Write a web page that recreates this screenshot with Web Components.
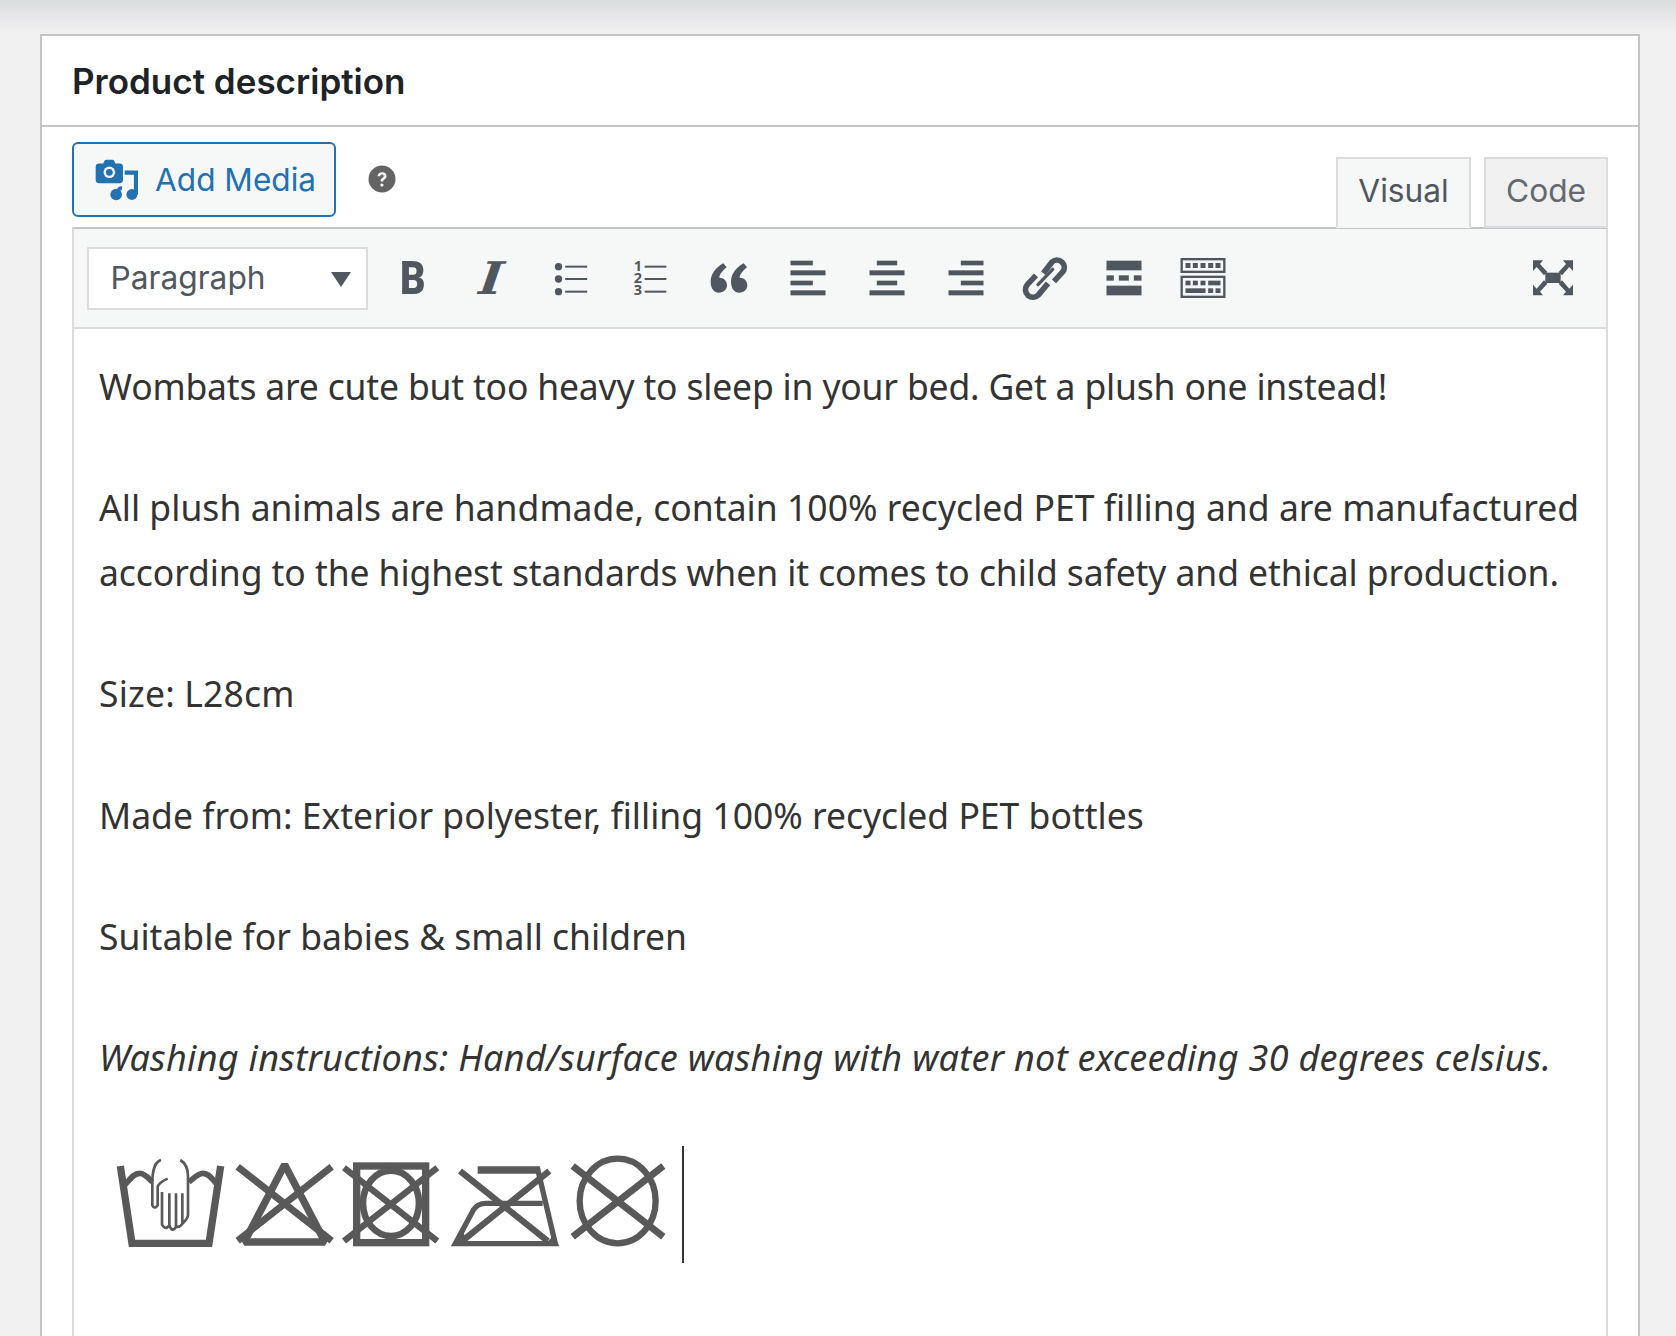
<!DOCTYPE html>
<html><head><meta charset="utf-8"><title>Product description</title>
<style>
html,body{margin:0;padding:0;background:#f0f0f1}
body{height:1336px;overflow:hidden}
</style></head>
<body>
<wp-page>
  <meta-box heading="Product description">
    <editor-frame>
      <media-button slot="left">Add Media</media-button>
      <help-dot slot="left"></help-dot>
      <editor-tab slot="tabs" active>Visual</editor-tab>
      <editor-tab slot="tabs">Code</editor-tab>
      <edit-toolbar slot="toolbar">
        <format-select>Paragraph</format-select>
        <tool-letter kind="b">B</tool-letter>
        <tool-letter kind="i">I</tool-letter>
        <tool-icon name="ul"></tool-icon>
        <tool-icon name="ol"></tool-icon>
        <tool-icon name="quote"></tool-icon>
        <tool-icon name="left"></tool-icon>
        <tool-icon name="center"></tool-icon>
        <tool-icon name="right"></tool-icon>
        <tool-icon name="link"></tool-icon>
        <tool-icon name="more"></tool-icon>
        <tool-icon name="sink"></tool-icon>
        <tool-icon name="full" style="margin-left:auto"></tool-icon>
      </edit-toolbar>
      <rich-content slot="content">
        <p style="letter-spacing:-.18px">Wombats are cute but too heavy to sleep in your bed. Get a plush one instead!</p>
        <p><span style="letter-spacing:.03px">All plush animals are handmade, contain 100% recycled PET filling and are manufactured</span> <span style="letter-spacing:-.08px">according to the highest standards when it comes to child safety and ethical production.</span></p>
        <p style="letter-spacing:.2px">Size: L28cm</p>
        <p>Made from: Exterior polyester, filling 100% recycled PET bottles</p>
        <p>Suitable for babies &amp; small children</p>
        <p style="font-size:36px;letter-spacing:.29px"><em>Washing instructions: Hand/surface washing with water not exceeding 30 degrees celsius.</em></p>
        <care-row></care-row>
      </rich-content>
    </editor-frame>
  </meta-box>
</wp-page>
<script>
const UI='Inter,"Liberation Sans",sans-serif';
function def(name,html,extra){
  customElements.define(name,class extends HTMLElement{
    constructor(){super();this.attachShadow({mode:'open'}).innerHTML=typeof html==='function'?html(this):html;}
    connectedCallback(){ if(extra) extra(this); }
  });
}
def('wp-page',`<style>
:host{display:block;height:1336px;overflow:hidden;background:#f0f0f1}
.shade{height:34px;background:linear-gradient(#dbdcde,#e6e6e8 45%,#eeeeef 85%,#f0f0f1)}
.wrap{padding:0 36px 0 40px}
</style><div class="shade"></div><div class="wrap"><slot></slot></div>`);

def('meta-box',`<style>
:host{display:block;background:#fff;border:2px solid #c3c4c7;font-family:${UI}}
h2{margin:0;height:89px;box-sizing:border-box;padding:2px 30px 0;display:flex;align-items:center;font:600 35px/1 ${UI};color:#1d2327}
.rule{height:2px;background:#c3c4c7}
.body{padding:15px 30px 0}
</style><h2 id="h"></h2><div class="rule"></div><div class="body"><slot></slot></div>`,
el=>{el.shadowRoot.getElementById('h').textContent=el.getAttribute('heading')});

def('editor-frame',`<style>
:host{display:block}
.tools{display:flex;justify-content:space-between;align-items:flex-end}
.left{display:flex;align-items:center;gap:32px;margin-bottom:10px}
.tabs{display:flex;gap:13px;margin-bottom:-1px;position:relative;z-index:1}
.area{border-left:2px solid #dcdcde;border-right:2px solid #dcdcde;background:#fff}
</style>
<div class="tools"><div class="left"><slot name="left"></slot></div><div class="tabs"><slot name="tabs"></slot></div></div>
<slot name="toolbar"></slot>
<div class="area"><slot name="content"></slot></div>`);

def('media-button',`<style>
:host{display:inline-flex;align-items:center;box-sizing:border-box;width:264px;height:75px;border:2px solid #2271b1;border-radius:6px;background:#f6f7f7;color:#2271b1;font:400 31.600px/1 ${UI};padding-left:21px;gap:17px}
svg{width:43px;height:43px;flex:none;margin-top:2px}
</style><svg viewBox="106 90 126 126" fill="#2271b1"><path d="M118 103h12l4-8q1-3 5-3h18q4 0 5 3l4 8h12q10 0 10 10v38q0 10-10 10h-60q-10 0-10-10v-38q0-10 10-10z"/><circle cx="148" cy="129" r="17" fill="#f6f7f7"/><circle cx="148" cy="129" r="10"/><path d="M193 124h39v11h-0v60h-12v-59h-27z"/><circle cx="214" cy="194" r="16"/><circle cx="168" cy="194" r="17"/><path d="M172 174q6-4 14-4l-2 12h-12z"/></svg><slot></slot>`);

def('help-dot',`<style>
:host{display:inline-block;width:28px;height:28px;margin:0 0 2px -.5px}
svg{display:block}
</style><svg width="28" height="28" viewBox="0 0 28 28"><circle cx="14" cy="14" r="13.5" fill="#646464"/><path d="M9.6 11.2c.2-2.600 2-3.900 4.500-3.900 2.600 0 4.400 1.500 4.400 3.700 0 1.700-.9 2.600-2.100 3.400-1 .7-1.300 1.100-1.300 2.100h-2.500c-.1-1.600.5-2.500 1.700-3.400 1-.7 1.500-1.200 1.500-2 0-.9-.7-1.500-1.700-1.500-1.100 0-1.800.7-1.900 1.600z" fill="#fff"/><circle cx="13.900" cy="20" r="1.600" fill="#fff"/></svg>`);

def('editor-tab',el=>{const a=el.hasAttribute('active');return `<style>
:host{display:block;box-sizing:border-box;height:71px;border:2px solid #dcdcde;${a?'border-bottom-color:#f6f7f7;width:135px;background:#f6f7f7;color:#50575e':'width:124px;background:#f0f0f1;color:#646970'};font:400 31.700px/1 ${UI}}
div{height:100%;display:flex;align-items:center;justify-content:center;padding-bottom:4px;box-sizing:border-box}
</style><div><slot></slot></div>`});

def('edit-toolbar',`<style>
:host{display:flex;align-items:center;box-sizing:content-box;height:98px;background:#f6f7f7;border:2px solid #dcdcde;border-top-color:#c3c4c7;padding:0 14px 0 12.500px}
</style><slot></slot>`);

def('format-select',`<style>
:host{display:flex;align-items:center;box-sizing:border-box;width:281px;height:63px;margin-right:6px;background:#fff;border:2px solid #dcdcde;padding:0 15px 0 22px;font:400 31.700px/1 ${UI};color:#50575e;justify-content:space-between}
i{display:block;width:0;height:0;border-left:10px solid transparent;border-right:10px solid transparent;border-top:15px solid #50575e;margin-top:3px}
</style><span><slot></slot></span><i></i>`);

def('tool-letter',el=>{const b=el.getAttribute('kind')==='b';return `<style>
:host{display:flex;width:79px;height:60px;align-items:center;justify-content:center;color:#50575e;flex:none;
${b?`font:900 46px/1 Roboto,sans-serif`:`font:italic 700 45px/1 "DejaVu Serif",serif`}}
span{display:block;${b?'transform:scaleX(.86)':'transform:skewX(-7deg) scaleX(1.12)'}}
</style><span><slot></slot></span>`});

const R=(x,y,w,h)=>`<rect x="${x}" y="${y}" width="${w}" height="${h}"/>`;
const ICONS={
 ul:[484.5,54,`<circle cx="537" cy="110" r="11"/><circle cx="537" cy="147" r="11"/><circle cx="537" cy="185" r="11"/>`+R(557,107,66,6)+R(557,144,66,6)+R(557,182,66,6)],
 ol:[721,54,R(795,107,65,6)+R(795,144,65,6)+R(795,182,65,6)],
 quote:[957,54,`<path d="M1030 100l10 12c-15 13-22 23-22 31 14 0 23 10 23 23s-11 22-24 22c-15 0-25-13-25-33 0-23 16-43 38-55z"/><path d="M1091 100l10 12c-15 13-22 23-22 31 14 0 23 10 23 23s-11 22-24 22c-15 0-25-13-25-33 0-23 16-43 38-55z"/>`],
 left:[1192.5,54,R(1230,92,67,14)+R(1230,121,105,15)+R(1230,152,67,14)+R(1230,181,105,15)],
 center:[-10.5,24,R(49,62,61,14)+R(27,91,105,15)+R(49,122,61,14)+R(27,151,105,15)],
 right:[226.5,24,R(301,62,68,14)+R(264,91,105,15)+R(301,122,68,14)+R(264,151,105,15)],
 link:[467,24,`<g fill="none" stroke="#50575e" stroke-width="17"><path d="M552 100L578 66A22 22 0 0 1 610 96L584 124"/><path d="M566 130L538 164A22 22 0 0 1 504 134L530 106"/><path d="M536 134l44-46" stroke-width="10" stroke-linecap="round"/></g>`],
 more:[700.5,24,R(738,62,105,29)+R(738,106,22,16)+R(775,106,30,16)+R(820,106,23,16)+R(738,137,105,29)],
 sink:[937.5,24,`<g fill="none" stroke="#50575e" stroke-width="7"><rect x="963.500" y="57.500" width="128" height="38"/><rect x="963.500" y="110.500" width="128" height="60"/></g>`+R(975,69,15,15)+R(997,69,15,15)+R(1020,69,15,15)+R(1043,69,15,15)+R(1065,69,15,15)+R(975,122,15,14)+R(997,122,15,14)+R(1020,122,15,14)+R(1043,122,37,14)+R(975,145,60,14)+R(1043,145,15,14)+R(1065,145,15,14)],
 full:[610,324,R(677,398,46,31)+[[0,0,'1 1'],[1400,0,'-1 1'],[0,827,'1 -1'],[1400,827,'-1 -1']].map(([x,y,s])=>`<path transform="translate(${x} ${y}) scale(${s})" d="M640 361h30l-9 11 22 24-10 10-22-25-11 12z"/>`).join('')]
};
def('tool-icon',el=>{const n=el.getAttribute('name');const [x,y,c]=ICONS[n];return `<style>
:host{display:flex;width:79px;height:60px;justify-content:center;flex:none;position:relative}
.nums{position:absolute;left:22px;top:8px;writing-mode:vertical-rl;text-orientation:upright;font:700 14.500px/10px "Open Sans",sans-serif;letter-spacing:-7px;color:#50575e;white-space:nowrap}
</style><svg width="60" height="60" viewBox="${x} ${y} 180 180" fill="#50575e">${c}</svg>${n==='ol'?'<span class="nums">123</span>':''}`});

def('rich-content',`<style>
:host{display:block;padding:25px 24px 0 25px;font:400 35.500px/65px "Noto Sans",sans-serif;color:#333;height:1100px;background:#fff}
::slotted(p){margin:0 0 56.200px}
</style><slot></slot>`);

const SY=[
 [40,360,`<g fill="none" stroke="#595959"><path stroke-width="22" d="M62 110L97 342H328L363 110"/><path stroke-width="17" d="M70 172C88 155 100 132 120 132C136 132 146 146 158 158M268 158C284 146 294 132 310 132C330 132 342 155 357 172"/><path stroke-width="8" d="M184 92C165 98 160 120 158 150V228Q165 242 174 228V172Q178 160 204 148M187 188V286Q197 304 209 288V192M209 288Q218 312 229 292V192M229 292Q240 296 248 283V192M248 283Q263 270 265 258V140C265 115 258 102 242 92"/></g>`],
 [400,323,`<g fill="none" stroke="#595959"><path stroke-width="22" stroke-linejoin="bevel" d="M555 106L434 338H676Z"/><path stroke-width="21" d="M414 112L696 334M696 112L414 334"/></g>`],
 [33,317,`<g fill="none" stroke="#595959"><rect x="80" y="110" width="207" height="230" stroke-width="22"/><ellipse cx="183" cy="222" rx="84" ry="98" stroke-width="20"/><path stroke-width="19" d="M42 115L322 335M322 115L42 335"/></g>`],
 [350,355,`<g fill="none" stroke="#595959"><path stroke-width="22" d="M445 122H632"/><path stroke-width="16" d="M624 115L678 343H378L432 242Q445 222 470 222H640"/><path stroke-width="19" d="M392 125L655 335M660 125L395 338"/></g><path fill="#595959" d="M366 350L400 290L410 345ZM690 350L672 320L640 350Z"/>`],
 [705,335,`<g fill="none" stroke="#595959"><ellipse cx="863" cy="215" rx="114" ry="127" stroke-width="19"/><path stroke-width="21" d="M728 110L1000 322M1000 110L728 322"/></g>`]
];
def('care-row',`<style>
:host{display:flex;height:117px;align-items:flex-start;padding-left:14px;margin-top:3px}
svg{display:block;flex:none;filter:blur(.45px)}
i{display:block;width:2px;height:117px;background:#333;margin-left:6px}
</style>`+SY.map(([x,w,c])=>`<svg width="${w/3}" height="116.67" viewBox="${x} 50 ${w} 350">${c}</svg>`).join('')+`<i></i>`);
</script>
</body></html>
